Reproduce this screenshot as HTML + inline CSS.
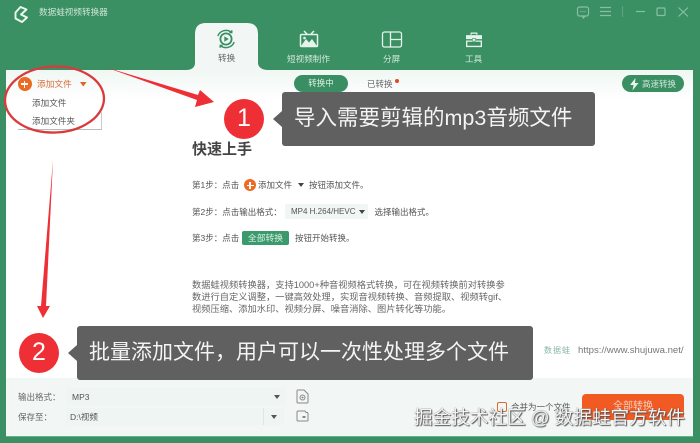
<!DOCTYPE html>
<html lang="zh"><head><meta charset="utf-8">
<style>
*{margin:0;padding:0;box-sizing:border-box}
html,body{width:700px;height:443px;overflow:hidden;background:#3a9062}
body{font-family:"Liberation Sans","Noto Sans CJK SC",sans-serif;color:#555}
#w{position:absolute;left:0;top:0;width:700px;height:443px;overflow:hidden;filter:blur(.3px)}
.a{position:absolute;white-space:nowrap;line-height:1}
svg{position:absolute;overflow:visible}
.bub{position:absolute;background:#606060;border-radius:3px;color:#f4f4f4;line-height:1;white-space:nowrap}
.num{position:absolute;width:40px;height:40px;border-radius:50%;background:#ee2f36;color:#fff;font-size:25px;line-height:39px;text-align:center}
.s{font-size:8.5px}
</style></head><body><div id="w">

<!-- content panel -->
<div style="position:absolute;left:6px;top:70px;width:687px;height:367px;background:#fff;border-bottom:1px solid #5fb48a"></div>
<div style="position:absolute;left:6px;top:70px;width:687px;height:30px;background:linear-gradient(#f0f7f3,#fff)"></div>
<div style="position:absolute;left:6px;top:378px;width:687px;height:58px;background:#f2f7f5"></div>

<!-- active tab -->
<svg style="left:180px;top:20px" width="95" height="52" viewBox="0 0 95 52"><path d="M6 50 C12 50 15 47 15 43 V14 Q15 3 26 3 H67 Q78 3 78 14 V43 C78 47 82 50 88 50 V52 H6Z" fill="#f2f7f5"/></svg>

<!-- title bar -->
<svg style="left:13px;top:5px" width="17" height="18" viewBox="0 0 17 18" fill="none" stroke="#eef7f2" stroke-width="1.900" stroke-linejoin="round"><path d="M2.500 7.500 L7.500 2 L13.500 4.500 L8 9.500 L14 12.500 L9 17 L2.500 13.500 Z"/></svg>
<div class="a" style="left:39px;top:8px;font-size:8.600px;color:#cfe4d8">数据蛙视频转换器</div>

<!-- window buttons -->
<svg style="left:575px;top:5px" width="120" height="20" viewBox="0 0 120 20" fill="none" stroke="#86c0a2" stroke-width="1.200">
<rect x="2.500" y="2" width="11" height="9" rx="2"/><path d="M7 11 L8.500 13 L10 11"/><path d="M5.500 6.500h1M7.500 6.500h1M9.500 6.500h1"/>
<path d="M25 2.500h11M25 6.500h11M25 10.500h11"/>
<path d="M47.500 1v11" stroke="#5aa57e"/>
<path d="M61 6.500h9"/>
<rect x="82" y="3" width="8" height="7.500" rx="1"/>
<path d="M103.500 2.500 L113 11.500 M113 2.500 L103.500 11.500"/>
</svg>

<!-- tab icons -->
<svg style="left:216px;top:28px" width="20" height="22" viewBox="0 0 20 22" fill="none" stroke="#3a8f62" stroke-width="1.500">
<path d="M1.800 8 A8.800 8.800 0 0 1 15.500 4.300"/><path d="M18.200 14 A8.800 8.800 0 0 1 4.500 17.700"/>
<path d="M15.800 2.300 L15.700 4.600 L13.300 4.500"/><path d="M4.200 19.700 L4.300 17.400 L6.700 17.500"/>
<circle cx="10" cy="11" r="5.600" stroke-width="1.800"/><path d="M8.300 8.300 L12.800 11 L8.300 13.700Z" fill="#3a8f62" stroke="none"/></svg>
<div class="a" style="left:218px;top:54px;font-size:8.600px;color:#666">转换</div>

<svg style="left:299px;top:30px" width="20" height="18" viewBox="0 0 20 18" fill="none" stroke="#e6f3ec" stroke-width="1.500">
<path d="M5 1 L8 4 M15 1 L12 4"/><rect x="1.500" y="4.500" width="17" height="12" rx="1"/><path d="M2 16 L7 9 L10 12.500 L13 9 L18 16Z" fill="#e6f3ec" stroke="none"/><circle cx="5.500" cy="8" r="1.300" fill="#e6f3ec" stroke="none"/></svg>
<div class="a" style="left:287px;top:54.500px;font-size:8.600px;color:#d4e8dd">短视频制作</div>

<svg style="left:381px;top:31px" width="21" height="17" viewBox="0 0 21 17" fill="none" stroke="#e6f3ec" stroke-width="1.300">
<rect x="1.500" y="1" width="19" height="15" rx="2"/><path d="M9.500 1v15M9.500 8.500h11"/></svg>
<div class="a" style="left:383px;top:54.500px;font-size:8.600px;color:#d4e8dd">分屏</div>

<svg style="left:465px;top:32px" width="18" height="16" viewBox="0 0 20 18" fill="#e6f3ec">
<path d="M6 3V1.500Q6 .5 7 .5H13Q14 .5 14 1.500V3H12.500V2H7.500V3Z"/>
<path d="M1 3.500H19V8H12V6.800H8V8H1Z"/><rect x="8.500" y="7.500" width="3" height="2.500"/>
<path d="M1 9.500H8V10.500H12V9.500H19V17H1ZM2.500 11V15.500H17.500V11Z"/></svg>
<div class="a" style="left:465px;top:54.500px;font-size:8.600px;color:#d4e8dd">工具</div>

<!-- toolbar -->
<div style="position:absolute;left:17.500px;top:77px;width:14px;height:14px;border-radius:50%;background:#ed6a22"></div>
<div class="a" style="left:21px;top:83.400px;width:7px;height:1.200px;background:#fff"></div>
<div class="a" style="left:23.900px;top:80.500px;width:1.200px;height:7px;background:#fff"></div>
<div class="a" style="left:37px;top:80px;font-size:8.700px;color:#d96a35">添加文件</div>
<svg style="left:80px;top:82px" width="7" height="5"><path d="M0 0H6.500L3.250 4.500Z" fill="#d9652c"/></svg>

<div class="a" style="left:32px;top:99px;font-size:8.600px;color:#555">添加文件</div>
<div class="a" style="left:32px;top:117px;font-size:8.600px;color:#555">添加文件夹</div>
<div style="position:absolute;left:18px;top:112px;width:84px;height:18px;border-bottom:1px solid #bbb;border-right:1px solid #ccc"></div>

<div class="a" style="left:294px;top:75px;width:54px;height:17px;border-radius:8.500px;background:#3a8f62;color:#dcefe5;font-size:8.500px;line-height:17px;text-align:center">转换中</div>
<div class="a" style="left:367px;top:80px;font-size:8.500px;color:#666">已转换</div>
<div style="position:absolute;left:395px;top:78.500px;width:4px;height:4px;border-radius:50%;background:#e8452c"></div>

<div style="position:absolute;left:622px;top:75px;width:62px;height:17px;border-radius:8.500px;background:#3a8f62"></div>
<svg style="left:630px;top:78px" width="9" height="13"><path d="M5.500 0 L0 7 H3.500 L2.500 12.500 L8.500 5 H5 Z" fill="#e8f4ee"/></svg>
<div class="a" style="left:642px;top:79.500px;font-size:8.500px;color:#cfe6da">高速转换</div>

<!-- quick start -->
<div class="a" style="left:192px;top:141.500px;font-size:15px;font-weight:bold;color:#444">快速上手</div>

<div class="a s" style="left:192px;top:181px">第1步：点击</div>
<div style="position:absolute;left:244px;top:179px;width:12px;height:12px;border-radius:50%;background:#ed6a22"></div>
<div class="a" style="left:246.500px;top:184.500px;width:7px;height:1.200px;background:#fff"></div>
<div class="a" style="left:249.400px;top:181.500px;width:1.200px;height:7px;background:#fff"></div>
<div class="a s" style="left:258px;top:181px">添加文件</div>
<svg style="left:297.500px;top:183px" width="7" height="4"><path d="M0 0H6L3 4Z" fill="#444"/></svg>
<div class="a s" style="left:309px;top:181px">按钮添加文件。</div>

<div class="a s" style="left:192px;top:208px">第2步：点击输出格式：</div>
<div style="position:absolute;left:285px;top:204px;width:83px;height:15px;background:#eff6f3;border-radius:2px"></div>
<div class="a" style="left:291px;top:208px;font-size:8px;color:#555">MP4 H.264/HEVC</div>
<svg style="left:359px;top:210px" width="7" height="4"><path d="M0 0H6L3 4Z" fill="#444"/></svg>
<div class="a s" style="left:374.500px;top:208px">选择输出格式。</div>

<div class="a s" style="left:192px;top:234px">第3步：点击</div>
<div class="a" style="left:242px;top:231px;width:47px;height:14px;border-radius:2px;background:#3a9a6c;color:#d8f0e4;font-size:8.800px;line-height:14px;text-align:center">全部转换</div>
<div class="a s" style="left:295px;top:234px">按钮开始转换。</div>

<div class="a" style="left:192px;top:281px;font-size:9.250px;color:#666">数据蛙视频转换器，支持1000+种音视频格式转换，可在视频转换前对转换参</div>
<div class="a" style="left:192px;top:293px;font-size:9.250px;color:#666">数进行自定义调整，一键高效处理，实现音视频转换、音频提取、视频转gif、</div>
<div class="a" style="left:192px;top:305px;font-size:9.250px;color:#666">视频压缩、添加水印、视频分屏、噪音消除、图片转化等功能。</div>

<div class="a" style="left:544px;top:347px;font-size:8px;color:#86b8a4;letter-spacing:1px">数据蛙</div>
<div class="a" style="left:578px;top:346px;font-size:9.600px;color:#777">https://www.shujuwa.net/</div>

<!-- bottom bar -->
<div class="a" style="left:18px;top:392.500px;font-size:8.500px;color:#666">输出格式：</div>
<div style="position:absolute;left:66px;top:388px;width:220px;height:17px;background:#eef5f2"></div>
<div class="a" style="left:72px;top:392.500px;font-size:8.500px;color:#555">MP3</div>
<svg style="left:274px;top:394.500px" width="7" height="4"><path d="M0 0H6L3 4Z" fill="#555"/></svg>
<svg style="left:296px;top:389px" width="13" height="15" viewBox="0 0 13 15" fill="none" stroke="#888" stroke-width="1"><path d="M1 2 Q1 1 2 1 H8 L12 5 V13 Q12 14 11 14 H2 Q1 14 1 13Z"/><circle cx="6.500" cy="8.500" r="2.500"/><circle cx="6.500" cy="8.500" r="1" fill="#888" stroke="none"/></svg>

<div class="a" style="left:18px;top:412.500px;font-size:8.500px;color:#666">保存至：</div>
<div style="position:absolute;left:66px;top:408px;width:218px;height:17px;background:#eef5f2"></div>
<div style="position:absolute;left:263px;top:408px;width:1px;height:17px;background:#dfe6e3"></div>
<div class="a" style="left:70px;top:412.500px;font-size:8.500px;color:#555">D:\视频</div>
<svg style="left:271px;top:414.500px" width="7" height="4"><path d="M0 0H6L3 4Z" fill="#555"/></svg>
<svg style="left:296px;top:410px" width="13" height="12" viewBox="0 0 13 12" fill="none" stroke="#888" stroke-width="1"><path d="M1 2.500 Q1 1 2 1 H9 L10 2.500 H11 Q12 2.500 12 4 V10 Q12 11 11 11 H2 Q1 11 1 10Z"/><rect x="6.500" y="6" width="3" height="2" fill="#888" stroke="none"/></svg>

<div style="position:absolute;left:497px;top:402px;width:10px;height:10px;border:1.300px solid #dc6a33;border-radius:2px"></div>
<div class="a" style="left:511px;top:403px;font-size:8.500px;color:#555">合并为一个文件</div>
<div style="position:absolute;left:582px;top:394px;width:102px;height:26px;border-radius:4px;background:#f15a22"></div>
<div class="a" style="left:613px;top:402px;font-size:10px;color:#f7d0bd">全部转换</div>

<!-- watermark -->
<div class="a" style="left:414px;top:409px;font-size:18.600px;color:#f4f4f4;text-shadow:0 0 1px #444,1px 1px 1px #555">掘金技术社区 @ 数据蛙官方软件</div>

<!-- annotations -->
<svg style="left:0;top:0" width="700" height="443" viewBox="0 0 700 443" fill="none">
<ellipse cx="54.500" cy="99.500" rx="49.500" ry="33" transform="rotate(-2 55 100)" stroke="#d93a3c" stroke-width="2.300"/>
<path d="M105 67 L198 95 L200 90 L214 102 L195 107 L197 100 Z" fill="#ee2f36"/>
<path d="M53 160 L46 306 L50 306 L43 318 L37 306 L41 306 Z" fill="#ee2f36"/>
</svg>

<div class="num" style="left:224px;top:99px">1</div>
<svg style="left:272px;top:111px" width="10" height="16"><path d="M10 0 V16 L1 8Z" fill="#606060"/></svg>
<div class="bub" style="left:282px;top:92px;width:313px;height:54px;line-height:52px;padding-left:12px;font-size:21.500px">导入需要剪辑的mp3音频文件</div>

<div class="num" style="left:19px;top:333px">2</div>
<svg style="left:67px;top:345px" width="10" height="16"><path d="M10 0 V16 L1 8Z" fill="#606060"/></svg>
<div class="bub" style="left:77px;top:326px;width:456px;height:54px;line-height:53px;padding-left:12px;font-size:21px">批量添加文件，用户可以一次性处理多个文件</div>

</div></body></html>
